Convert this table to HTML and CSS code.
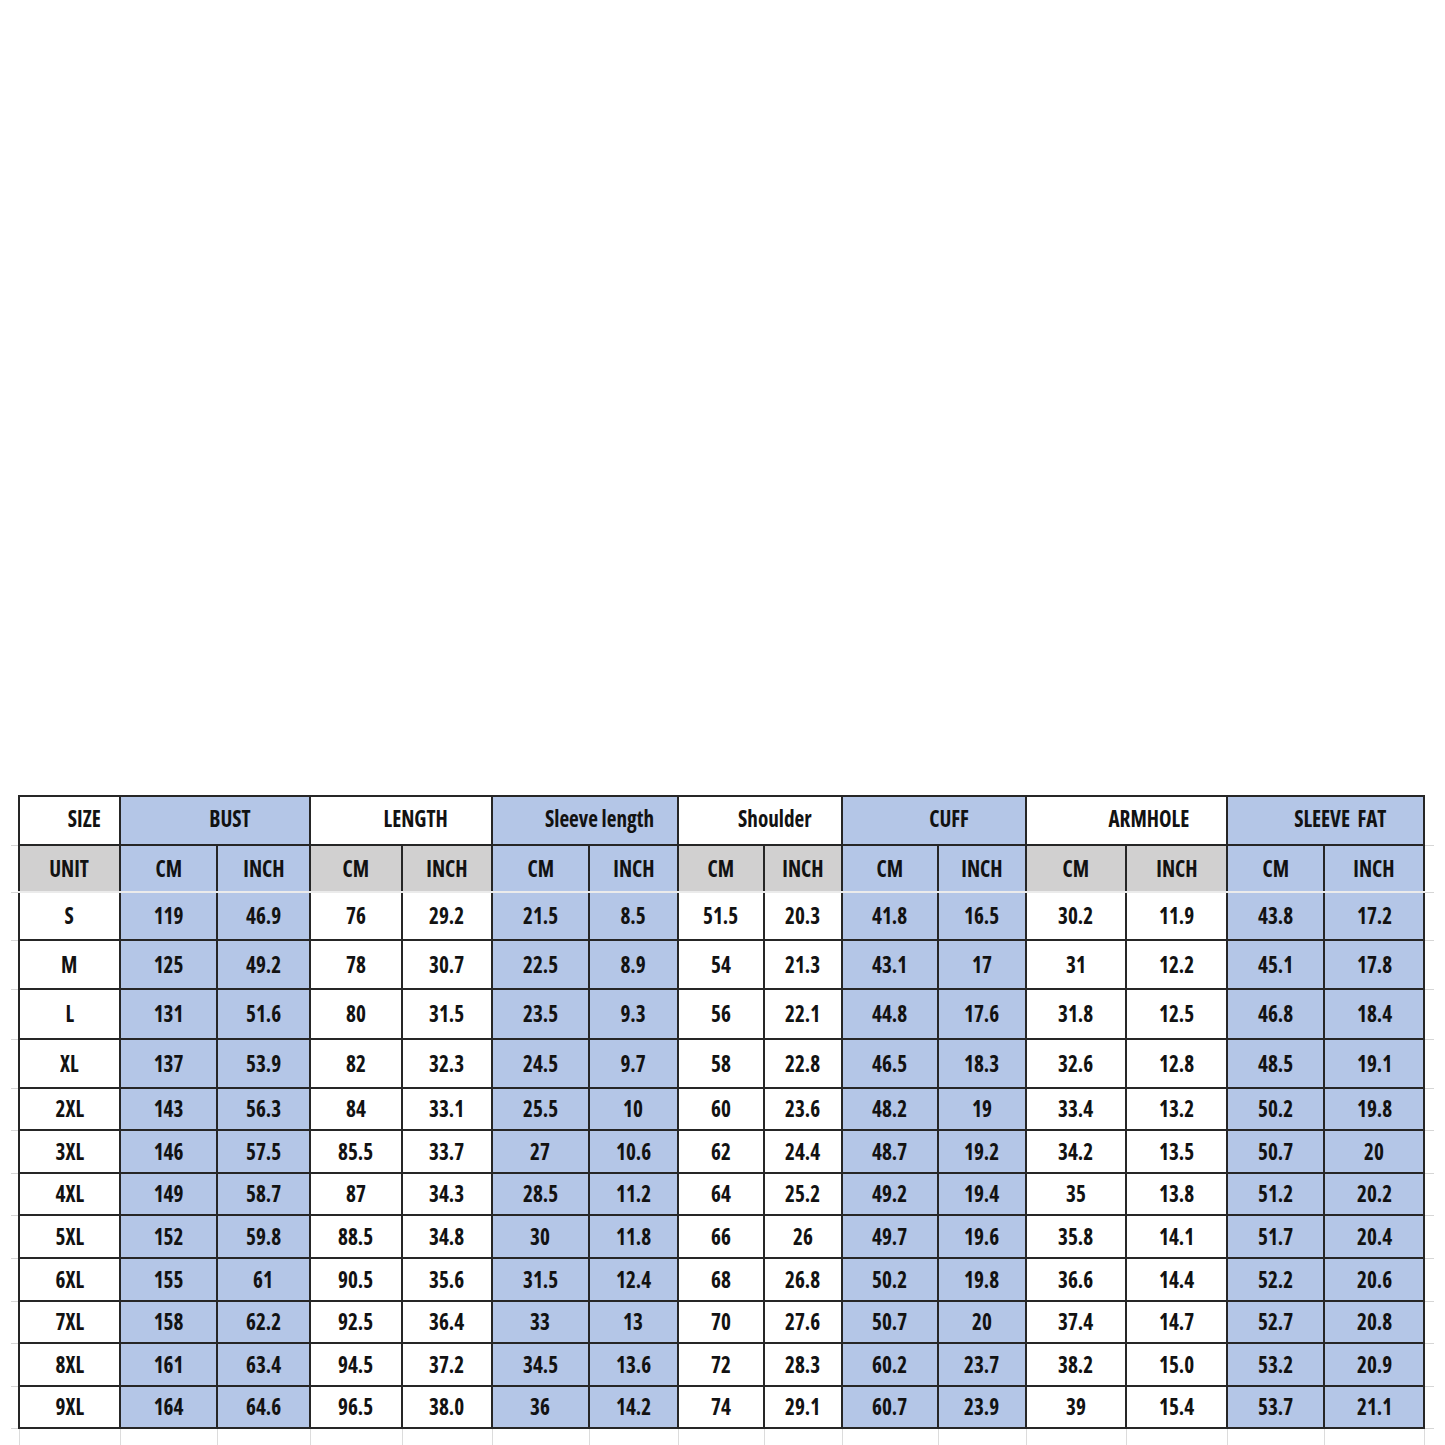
FILE: index.html
```html
<!DOCTYPE html>
<html lang="en">
<head>
<meta charset="utf-8">
<title>Size chart</title>
<link rel="stylesheet" href="styles.css">
</head>
<body>
<div class="page">
<table class="chart">
  <colgroup>
    <col class="c-tl"><col class="c1"><col class="c2"><col class="c3"><col class="c4"><col class="c5"><col class="c6"><col class="c7"><col class="c8"><col class="c9"><col class="c10"><col class="c11"><col class="c12"><col class="c13"><col class="c14"><col class="c15"><col class="c-tr">
  </colgroup>
  <thead>
    <tr class="r-group">
      <td class="tick"></td>
      <th class="gh"><span class="t">SIZE</span></th>
      <th class="gh blue" colspan="2"><span class="t">BUST</span></th>
      <th class="gh" colspan="2"><span class="t">LENGTH</span></th>
      <th class="gh blue" colspan="2"><span class="t">Sleeve length</span></th>
      <th class="gh" colspan="2"><span class="t">Shoulder</span></th>
      <th class="gh blue" colspan="2"><span class="t">CUFF</span></th>
      <th class="gh gh-wide" colspan="2"><span class="t">ARMHOLE</span></th>
      <th class="gh blue" colspan="2"><span class="t">SLEEVE&nbsp; FAT</span></th>
      <td class="tick"></td>
    </tr>
    <tr class="r-unit">
      <td class="tick"></td>
      <th><span class="t">UNIT</span></th>
      <th class="blue"><span class="t">CM</span></th><th class="blue"><span class="t">INCH</span></th>
      <th><span class="t">CM</span></th><th><span class="t">INCH</span></th>
      <th class="blue"><span class="t">CM</span></th><th class="blue"><span class="t">INCH</span></th>
      <th><span class="t">CM</span></th><th><span class="t">INCH</span></th>
      <th class="blue"><span class="t">CM</span></th><th class="blue"><span class="t">INCH</span></th>
      <th><span class="t">CM</span></th><th><span class="t">INCH</span></th>
      <th class="blue"><span class="t">CM</span></th><th class="blue"><span class="t">INCH</span></th>
      <td class="tick"></td>
    </tr>
  </thead>
  <tbody>
    <tr class="r-tall"><td class="tick"></td><th><span class="t">S</span></th><td class="blue"><span class="t">119</span></td><td class="blue"><span class="t">46.9</span></td><td><span class="t">76</span></td><td><span class="t">29.2</span></td><td class="blue"><span class="t">21.5</span></td><td class="blue"><span class="t">8.5</span></td><td><span class="t">51.5</span></td><td><span class="t">20.3</span></td><td class="blue"><span class="t">41.8</span></td><td class="blue"><span class="t">16.5</span></td><td><span class="t">30.2</span></td><td><span class="t">11.9</span></td><td class="blue"><span class="t">43.8</span></td><td class="blue"><span class="t">17.2</span></td><td class="tick"></td></tr>
    <tr class="r-tall2"><td class="tick"></td><th><span class="t">M</span></th><td class="blue"><span class="t">125</span></td><td class="blue"><span class="t">49.2</span></td><td><span class="t">78</span></td><td><span class="t">30.7</span></td><td class="blue"><span class="t">22.5</span></td><td class="blue"><span class="t">8.9</span></td><td><span class="t">54</span></td><td><span class="t">21.3</span></td><td class="blue"><span class="t">43.1</span></td><td class="blue"><span class="t">17</span></td><td><span class="t">31</span></td><td><span class="t">12.2</span></td><td class="blue"><span class="t">45.1</span></td><td class="blue"><span class="t">17.8</span></td><td class="tick"></td></tr>
    <tr class="r-tall3"><td class="tick"></td><th><span class="t">L</span></th><td class="blue"><span class="t">131</span></td><td class="blue"><span class="t">51.6</span></td><td><span class="t">80</span></td><td><span class="t">31.5</span></td><td class="blue"><span class="t">23.5</span></td><td class="blue"><span class="t">9.3</span></td><td><span class="t">56</span></td><td><span class="t">22.1</span></td><td class="blue"><span class="t">44.8</span></td><td class="blue"><span class="t">17.6</span></td><td><span class="t">31.8</span></td><td><span class="t">12.5</span></td><td class="blue"><span class="t">46.8</span></td><td class="blue"><span class="t">18.4</span></td><td class="tick"></td></tr>
    <tr class="r-tall2"><td class="tick"></td><th><span class="t">XL</span></th><td class="blue"><span class="t">137</span></td><td class="blue"><span class="t">53.9</span></td><td><span class="t">82</span></td><td><span class="t">32.3</span></td><td class="blue"><span class="t">24.5</span></td><td class="blue"><span class="t">9.7</span></td><td><span class="t">58</span></td><td><span class="t">22.8</span></td><td class="blue"><span class="t">46.5</span></td><td class="blue"><span class="t">18.3</span></td><td><span class="t">32.6</span></td><td><span class="t">12.8</span></td><td class="blue"><span class="t">48.5</span></td><td class="blue"><span class="t">19.1</span></td><td class="tick"></td></tr>
    <tr class="r-short"><td class="tick"></td><th><span class="t">2XL</span></th><td class="blue"><span class="t">143</span></td><td class="blue"><span class="t">56.3</span></td><td><span class="t">84</span></td><td><span class="t">33.1</span></td><td class="blue"><span class="t">25.5</span></td><td class="blue"><span class="t">10</span></td><td><span class="t">60</span></td><td><span class="t">23.6</span></td><td class="blue"><span class="t">48.2</span></td><td class="blue"><span class="t">19</span></td><td><span class="t">33.4</span></td><td><span class="t">13.2</span></td><td class="blue"><span class="t">50.2</span></td><td class="blue"><span class="t">19.8</span></td><td class="tick"></td></tr>
    <tr class="r-short2"><td class="tick"></td><th><span class="t">3XL</span></th><td class="blue"><span class="t">146</span></td><td class="blue"><span class="t">57.5</span></td><td><span class="t">85.5</span></td><td><span class="t">33.7</span></td><td class="blue"><span class="t">27</span></td><td class="blue"><span class="t">10.6</span></td><td><span class="t">62</span></td><td><span class="t">24.4</span></td><td class="blue"><span class="t">48.7</span></td><td class="blue"><span class="t">19.2</span></td><td><span class="t">34.2</span></td><td><span class="t">13.5</span></td><td class="blue"><span class="t">50.7</span></td><td class="blue"><span class="t">20</span></td><td class="tick"></td></tr>
    <tr class="r-short"><td class="tick"></td><th><span class="t">4XL</span></th><td class="blue"><span class="t">149</span></td><td class="blue"><span class="t">58.7</span></td><td><span class="t">87</span></td><td><span class="t">34.3</span></td><td class="blue"><span class="t">28.5</span></td><td class="blue"><span class="t">11.2</span></td><td><span class="t">64</span></td><td><span class="t">25.2</span></td><td class="blue"><span class="t">49.2</span></td><td class="blue"><span class="t">19.4</span></td><td><span class="t">35</span></td><td><span class="t">13.8</span></td><td class="blue"><span class="t">51.2</span></td><td class="blue"><span class="t">20.2</span></td><td class="tick"></td></tr>
    <tr class="r-short2"><td class="tick"></td><th><span class="t">5XL</span></th><td class="blue"><span class="t">152</span></td><td class="blue"><span class="t">59.8</span></td><td><span class="t">88.5</span></td><td><span class="t">34.8</span></td><td class="blue"><span class="t">30</span></td><td class="blue"><span class="t">11.8</span></td><td><span class="t">66</span></td><td><span class="t">26</span></td><td class="blue"><span class="t">49.7</span></td><td class="blue"><span class="t">19.6</span></td><td><span class="t">35.8</span></td><td><span class="t">14.1</span></td><td class="blue"><span class="t">51.7</span></td><td class="blue"><span class="t">20.4</span></td><td class="tick"></td></tr>
    <tr class="r-short2"><td class="tick"></td><th><span class="t">6XL</span></th><td class="blue"><span class="t">155</span></td><td class="blue"><span class="t">61</span></td><td><span class="t">90.5</span></td><td><span class="t">35.6</span></td><td class="blue"><span class="t">31.5</span></td><td class="blue"><span class="t">12.4</span></td><td><span class="t">68</span></td><td><span class="t">26.8</span></td><td class="blue"><span class="t">50.2</span></td><td class="blue"><span class="t">19.8</span></td><td><span class="t">36.6</span></td><td><span class="t">14.4</span></td><td class="blue"><span class="t">52.2</span></td><td class="blue"><span class="t">20.6</span></td><td class="tick"></td></tr>
    <tr class="r-short"><td class="tick"></td><th><span class="t">7XL</span></th><td class="blue"><span class="t">158</span></td><td class="blue"><span class="t">62.2</span></td><td><span class="t">92.5</span></td><td><span class="t">36.4</span></td><td class="blue"><span class="t">33</span></td><td class="blue"><span class="t">13</span></td><td><span class="t">70</span></td><td><span class="t">27.6</span></td><td class="blue"><span class="t">50.7</span></td><td class="blue"><span class="t">20</span></td><td><span class="t">37.4</span></td><td><span class="t">14.7</span></td><td class="blue"><span class="t">52.7</span></td><td class="blue"><span class="t">20.8</span></td><td class="tick"></td></tr>
    <tr class="r-short2"><td class="tick"></td><th><span class="t">8XL</span></th><td class="blue"><span class="t">161</span></td><td class="blue"><span class="t">63.4</span></td><td><span class="t">94.5</span></td><td><span class="t">37.2</span></td><td class="blue"><span class="t">34.5</span></td><td class="blue"><span class="t">13.6</span></td><td><span class="t">72</span></td><td><span class="t">28.3</span></td><td class="blue"><span class="t">60.2</span></td><td class="blue"><span class="t">23.7</span></td><td><span class="t">38.2</span></td><td><span class="t">15.0</span></td><td class="blue"><span class="t">53.2</span></td><td class="blue"><span class="t">20.9</span></td><td class="tick"></td></tr>
    <tr class="r-short"><td class="tick"></td><th><span class="t">9XL</span></th><td class="blue"><span class="t">164</span></td><td class="blue"><span class="t">64.6</span></td><td><span class="t">96.5</span></td><td><span class="t">38.0</span></td><td class="blue"><span class="t">36</span></td><td class="blue"><span class="t">14.2</span></td><td><span class="t">74</span></td><td><span class="t">29.1</span></td><td class="blue"><span class="t">60.7</span></td><td class="blue"><span class="t">23.9</span></td><td><span class="t">39</span></td><td><span class="t">15.4</span></td><td class="blue"><span class="t">53.7</span></td><td class="blue"><span class="t">21.1</span></td><td class="tick"></td></tr>
    <tr class="r-ghost"><td class="tick-none"></td><td></td><td></td><td></td><td></td><td></td><td></td><td></td><td></td><td></td><td></td><td></td><td></td><td></td><td></td><td></td><td class="tick-none"></td></tr>
  </tbody>
</table>
</div>
</body>
</html>
```
FILE: styles.css
```css
html, body {
  margin: 0;
  background: #ffffff;
}

.page {
  padding: 795px 0 0 11px;
}

.chart {
  border-collapse: collapse;
  table-layout: fixed;
  width: 1423px;
}

.c-tl { width: 8px; }
.c1 { width: 101px; }
.c2 { width: 97px; }
.c3 { width: 93px; }
.c4 { width: 92px; }
.c5 { width: 90px; }
.c6 { width: 97px; }
.c7 { width: 89px; }
.c8 { width: 86px; }
.c9 { width: 78px; }
.c10 { width: 96px; }
.c11 { width: 88px; }
.c12 { width: 100px; }
.c13 { width: 101px; }
.c14 { width: 97px; }
.c15 { width: 100px; }
.c-tr { width: 10px; }

.chart th,
.chart td {
  border: 2px solid #262626;
  padding: 0;
  text-align: center;
  vertical-align: middle;
  font-family: "Open Sans", "DejaVu Sans Condensed", sans-serif;
  font-stretch: 75%;
  font-weight: 700;
  font-size: 23.5px;
  line-height: 1;
  color: #121212;
  background: #ffffff;
  white-space: nowrap;
}

.t {
  display: inline-block;
  transform: scaleX(0.9);
  transform-origin: center;
}

.chart .blue { background: #b4c6e7; }

.chart .gh { padding-left: 30px; padding-bottom: 3px; }
.chart .gh-wide { padding-left: 45px; }

.r-group { height: 49px; }
.r-unit { height: 47px; }
.r-unit th { background: #d1d0d0; border-bottom-color: #ebebeb; }
.r-unit th.blue { background: #b4c6e7; }

.r-tall { height: 48px; }
.r-tall2 { height: 49px; }
.r-tall3 { height: 50px; }
.r-short { height: 42px; }
.r-short2 { height: 43px; }

.chart .tick {
  border: none;
  border-bottom: 1px solid #d6d6d6;
  background: transparent;
}
.chart .tick-none {
  border: none;
  background: transparent;
}

.r-ghost { height: 18px; }
.r-ghost td {
  border-top: none;
  border-bottom: none;
  border-left: 1px solid #dcdcdc;
  border-right: 1px solid #dcdcdc;
}
.r-ghost td.tick-none { border: none; }
```
